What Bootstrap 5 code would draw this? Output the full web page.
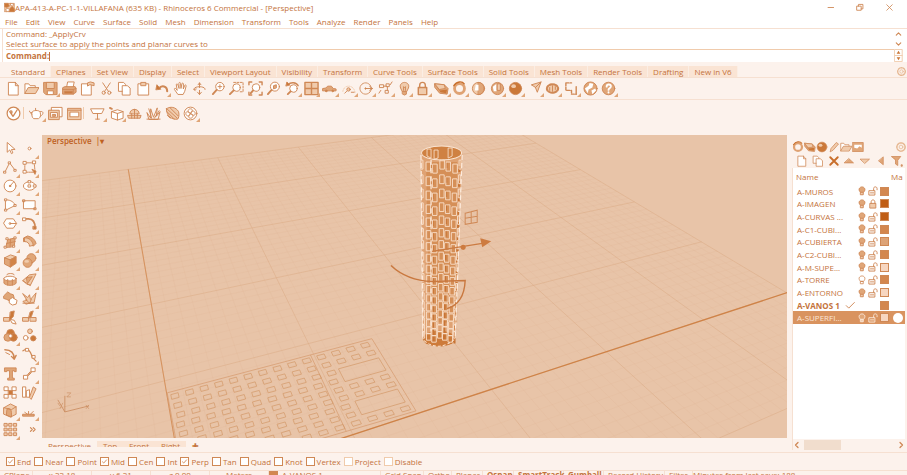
<!DOCTYPE html>
<html lang="en">
<head>
<meta charset="utf-8">
<meta name="viewport" content="width=device-width, initial-scale=1">
<title>APA-413-A-PC-1-1-VILLAFANA (635 KB) - Rhinoceros 6 Commercial - [Perspective]</title>
<link rel="stylesheet" href="https://cdn.jsdelivr.net/npm/bootstrap@5.3.0/dist/css/bootstrap.min.css">
<style>
:root { --ink:#c4733c; --line:#cf8855; --soft:#f0cbac; --mid:#e0a678; --deep:#cb7838; --face:#fcf2ec; --rule:#f6e0d1; --view:#e8c4a8; }
body { font-family:"Open Sans","Noto Sans",sans-serif; font-size:8px; line-height:12px; color:var(--ink); background:var(--face); }
svg { display:block; }
.glyph { width:15px; height:15px; fill:none; stroke:var(--line); stroke-width:1; stroke-linejoin:round; stroke-linecap:round; }
.glyph .f, .f { fill:var(--soft); }
.m { fill:var(--mid); }
.d { fill:var(--deep); }
.w { fill:#fff; }
.titlebar { height:15px; }
.titlebar .glyph { width:11px; height:11px; }
.winbtns { gap:18px; padding-right:12px; }
.plain { background:none; border:0; padding:0; color:inherit; font-size:inherit; line-height:inherit; text-align:left; text-decoration:none; }
.menubar { height:13px; gap:8px; padding-left:5px; }
.cmd { border-top:1px solid var(--rule); padding-left:2px; }
.cmdbox { border-left:1px solid var(--rule); padding-left:3px; }
.history { height:21px; line-height:10px; border-bottom:1px solid var(--soft); }
.prompt { height:12px; }
.prompt input { border:0; border-left:1px solid var(--ink); outline:0; height:9px; padding:0; background:none; color:inherit; }
.spin { width:9px; }
.spin .glyph { width:9px; height:10px; }
.spin .glyph.duo { height:13px; }
.tabstrip { height:12px; margin-top:4px; padding-left:6px; border-bottom:1px solid var(--rule); }
.tabstrip a { padding:0 5px; background:#fae4d4; border-right:1px solid #fbeee4; }
.tabstrip a.on { background:var(--face); }
.tabstrip .glyph { width:11px; height:11px; }
.tools1 { height:22px; padding-left:4px; border-bottom:1px solid var(--rule); }
.tools2 { height:26px; padding-left:4px; }
.run1 { width:614px; }
.run2 { width:196px; }
.tool { position:relative; line-height:1; border:0; }
.fly::after { content:""; position:absolute; right:0; bottom:-1px; border:2px solid transparent; border-right-color:var(--mid); border-bottom-color:var(--mid); }
.sep { width:5px; border-left:1px solid var(--soft); height:12px; }
.workspace { padding-top:9px; min-height:0; }
.palette { width:38px; margin:4px 0 13px 1px; display:grid; grid-template-columns:1fr 1fr; grid-auto-rows:1fr; }
.palette .glyph { width:15px; height:15px; }
.stage { margin-left:3px; }
.scene { background:var(--view); }
.scene svg { width:100%; height:100%; }
.scene-title { position:absolute; left:5px; top:0; color:#bf6122; font-weight:600; }
.viewtabs { height:9px; overflow:hidden; padding-top:3px; margin-bottom:5px; }
.viewtabs a { padding:0 6px; line-height:10px; }
.viewtabs a.side { background:#fae4d4; }
.panel { width:115px; margin:5px 0 2px 5px; }
.paneltabs { height:14px; }
.paneltabs .glyph { width:12px; height:12px; }
.paneltools { height:14px; }
.paneltools .glyph { width:12px; height:12px; }
.layers { border-left:1px solid var(--rule); margin-right:2px; }
.layertable { width:100%; table-layout:fixed; line-height:11px; }
.layertable th { font-weight:400; height:17px; padding:0 0 0 3px; white-space:nowrap; overflow:hidden; }
.layertable td { padding:0 0 0 4px; height:12px; white-space:nowrap; overflow:hidden; }
.layertable td + td { padding:0; }
.layertable tr:nth-child(3n+2) td { height:13px; }
.layertable tr:nth-child(3n) td { height:13px; }
.layertable .glyph { width:10px; height:10px; margin:auto; }
.layertable .chosen { background:#d9935f; color:#fbe6d6; }
.layertable .chosen .glyph { stroke:#fbe6d6; }
.swatch { display:block; width:9px; height:9px; border:1px solid var(--line); }
.t1 { background:#d3874f; } .t2 { background:#c05e16; } .t3 { background:#dda377; } .t4 { background:#f7d6c0; }
.ball { display:block; width:10px; height:10px; border-radius:50%; background:#fff; }
.hscroll { height:11px; background:var(--face); }
.hscroll .glyph { width:8px; height:8px; }
.thumb { width:37px; height:10px; background:#f1ddcd; margin-left:3px; }
.bottom { height:23px; overflow:hidden; border-top:1px solid var(--rule); }
.osnap { height:17px; padding-left:6px; gap:3px; }
.osnap label { display:flex; align-items:center; gap:2px; }
.osnap .form-check-input { width:9px; height:9px; margin:0; border-radius:0; border:1px solid var(--line); background-color:#fff; }
.osnap .form-check-input:checked { background-image:url("data:image/svg+xml,%3Csvg xmlns='http://www.w3.org/2000/svg' viewBox='0 0 9 9'%3E%3Cpath d='M1.5 4.5l2 2 4-4.500' fill='none' stroke='%23c9783f'/%3E%3C/svg%3E"); }
.osnap .form-check-input:disabled { border-color:var(--soft); opacity:1; }
.osnap .form-check-input:disabled ~ span { opacity:1; }
.status { border-top:1px solid var(--rule); height:12px; line-height:8px; white-space:nowrap; }
.status > * { flex:none; border-right:1px solid var(--rule); height:12px; }
.c26{width:33px}.c59{width:59px}.c28{width:28px}.c33{width:31px}.c44{width:43px}.c50{width:50px}.c40{width:40px}.c61{width:61px}.c115{width:112px}
</style>
<script src="https://cdn.jsdelivr.net/npm/bootstrap@5.3.0/dist/js/bootstrap.bundle.min.js"></script>
</head>
<body class="vh-100 d-flex flex-column overflow-hidden">
<svg class="d-none" xmlns="http://www.w3.org/2000/svg">
<symbol id="rhino" viewBox="0 0 16 16"><path class="f" d="M1 2h14v12H1z"/><path class="d" d="M1 2h5l2 4-4 2-3-1zM9 9l3-3 3 4v4H7z"/><path class="w" d="M3 10l4-1 1 4-4 1zM10 2l4 1-1 3-3-1z"/></symbol>
<symbol id="min" viewBox="0 0 16 16"><path stroke-width="1.300" d="M3 8h8"/></symbol>
<symbol id="max" viewBox="0 0 16 16"><path stroke-width="1.300" d="M3 6h6v6H3zM5 6V3.500h6.500V10H9"/></symbol>
<symbol id="close" viewBox="0 0 16 16"><path stroke-width="1.200" d="M4 4l8 8M12 4l-8 8"/></symbol>
<symbol id="up" viewBox="0 0 16 16"><path stroke-width="2" d="M4 10l4-4 4 4"/></symbol>
<symbol id="down" viewBox="0 0 16 16"><path stroke-width="2" d="M4 6l4 4 4-4"/></symbol>
<symbol id="left" viewBox="0 0 16 16"><path stroke-width="2.500" d="M10 3L5 8l5 5"/></symbol>
<symbol id="right" viewBox="0 0 16 16"><path stroke-width="2.500" d="M6 3l5 5-5 5"/></symbol>
<symbol id="spinner" viewBox="0 0 9 14"><path stroke="#f0cbac" d="M.5.5h8v13h-8zM.5 7h8"/><path class="d" stroke="none" d="M2.500 5h4l-2-3zM2.500 9h4l-2 3z"/></symbol>
<symbol id="gear" viewBox="0 0 16 16"><circle stroke="#e6b892" cx="8" cy="8" r="5.500" stroke-width="2" stroke-dasharray="2.500 1.500"/><circle stroke="#e6b892" cx="8" cy="8" r="2.500"/></symbol>
<symbol id="new" viewBox="0 0 16 16"><path class="w" d="M3 1.500h7l3 3.500v10H3zM10 1.500V5h3"/></symbol>
<symbol id="open" viewBox="0 0 16 16"><path class="w" d="M1 13V3h4l1.500 2H12v2"/><path class="f" d="M1 13l3.500-6H16l-3.500 6z"/></symbol>
<symbol id="save" viewBox="0 0 16 16"><path class="m" d="M1 1.500h14v13H3l-2-2z"/><path class="f" d="M4 1.500h8V8H4z"/><path class="w" d="M5 10.500h6v4H5z"/></symbol>
<symbol id="print" viewBox="0 0 16 16"><path class="w" d="M5 6l1-5h7l-1 5"/><path class="m" d="M1 7l2-1h11l1 2v4l-3 2H1z"/><path class="d" d="M3 11h8v2H3z"/><path d="M1 9h11l3-1M12 9v5"/></symbol>
<symbol id="notes" viewBox="0 0 16 16"><path class="w" d="M2 3h10v12H2z"/><path class="f" d="M8 5V2l3-1 4 1v3l-4-1z"/></symbol>
<symbol id="cut" viewBox="0 0 16 16"><path d="M4 2l6 9M12 2l-6 9"/><circle cx="5" cy="12.500" r="1.700"/><circle cx="11" cy="12.500" r="1.700"/></symbol>
<symbol id="copy" viewBox="0 0 16 16"><path class="w" d="M2 1.500h5l2 2V11H2z"/><path class="w" d="M6 5h5l3 2.500V15H6z"/></symbol>
<symbol id="paste" viewBox="0 0 16 16"><path class="w" d="M2.500 3h11v12h-11z"/><path class="f" d="M5.500 1.500h5V5h-5z"/></symbol>
<symbol id="undo" viewBox="0 0 16 16"><path stroke-width="2.200" d="M4 8c3-4 9-3 9 3"/><path class="d" d="M1 9l1-5 4 4.500z"/></symbol>
<symbol id="hand" viewBox="0 0 16 16"><path class="w" d="M5 14L1.500 9c-.5-1 .8-1.600 1.500-.8L4.500 10 3.500 4c0-1.300 1.400-1.300 1.700 0L6.500 8 6.300 2.500c0-1.300 1.600-1.300 1.700 0L8.500 8l1-5c.2-1.200 1.600-1 1.600.2L11 8.500l1.500-3.800c.5-1 1.700-.5 1.500.6L12.500 11 11 14z"/></symbol>
<symbol id="orbit" viewBox="0 0 16 16"><path d="M8 2v5M8 10v4M6 12l2 2.500 2-2.500M2 9c-1-4 13-4 12 0M3.500 10.500L2 9l2.500-.5"/><path d="M6.500 4L8 2l1.500 2"/></symbol>
<symbol id="zoom" viewBox="0 0 16 16"><circle class="w" cx="9.500" cy="6" r="4.500"/><path stroke-width="2" d="M6 9.500L2 14"/><path d="M9.500 4v4M7.500 6h4"/></symbol>
<symbol id="zoomwin" viewBox="0 0 16 16"><path stroke-dasharray="2 1.500" d="M5 1.500h10v10h-4"/><circle class="w" cx="8" cy="7" r="4"/><path stroke-width="2" d="M5 10l-4 4"/></symbol>
<symbol id="zoomext" viewBox="0 0 16 16"><circle class="w" cx="8.500" cy="7" r="4"/><path stroke-width="2" d="M5.500 10L3 13"/><path stroke-width="1.500" d="M1 4V1h3M12 1h3v3M15 12v3h-3M4 15H1v-3"/></symbol>
<symbol id="zoomsel" viewBox="0 0 16 16"><circle class="w" cx="9.500" cy="6" r="4.800"/><path class="m" d="M8 8V5l3-1v3z"/><path stroke-width="2" d="M6 9.500L2 14"/></symbol>
<symbol id="zoomundo" viewBox="0 0 16 16"><circle class="w" cx="9" cy="8" r="4"/><path stroke-width="2" d="M6 11l-3 3"/><path stroke-width="1.500" d="M3 4c3-3 9-3 11 1"/><path class="d" d="M1 5l1-4 3 3z"/></symbol>
<symbol id="four" viewBox="0 0 16 16"><path class="f" stroke-width="1.500" d="M1 1.500h14v13H1zM8 1.500v13M1 8h14"/></symbol>
<symbol id="car" viewBox="0 0 16 16"><path class="m" d="M1 8l3-.5L6 5.500h4L12 8l3 .5v2H1z"/><circle class="d" cx="4.500" cy="10.500" r="1"/><circle class="d" cx="11.500" cy="10.500" r="1"/></symbol>
<symbol id="cplane" viewBox="0 0 16 16"><path stroke="#f0cbac" stroke-dasharray="1.500 1.500" d="M2 11c1-7 11-8 13 1"/><circle class="f" cx="8" cy="9" r="1.800"/><path d="M11 12h3M4 13l2-2"/></symbol>
<symbol id="circ" viewBox="0 0 16 16"><circle stroke-dasharray="2 1" cx="7" cy="8" r="6"/><path d="M7 8h7M11.500 6l3 2-3 2"/><circle class="d" cx="7" cy="8" r=".7"/></symbol>
<symbol id="points" viewBox="0 0 16 16"><path d="M2 4h4v3H2zM9 3h3v3H9zM8 10h3v3H8zM1 13l2-3M6 5.500h3M10 6v4M13 4l2-3"/></symbol>
<symbol id="lamp" viewBox="0 0 16 16"><path class="f" d="M5.500 11L3.800 7.500C2.500 4 5 1.500 8 1.500S13.500 4 12.200 7.500L10.500 11z"/><path class="m" d="M6 11h4v3l-2 1-2-1z"/><path d="M7 10V6l1 1 1-1v4"/></symbol>
<symbol id="lampon" viewBox="0 0 16 16"><path class="m" stroke-width="1.500" d="M5.500 10C1 6 4 1.500 8 1.500S15 6 10.500 10z"/><path class="f" stroke-width="1.500" d="M6 10h4v4H6z"/></symbol>
<symbol id="lampoff" viewBox="0 0 16 16"><path class="w" stroke-width="1.300" d="M5.500 10C1 6 4 1.500 8 1.500S15 6 10.500 10zM6 10h4v4H6z"/></symbol>
<symbol id="lock" viewBox="0 0 16 16"><path class="f" stroke-width="1.500" d="M3.500 7h9v7.500h-9z"/><path stroke-width="1.500" d="M5 7V4.500c0-4 6-4 6 0V7"/></symbol>
<symbol id="unlock" viewBox="0 0 16 16"><path stroke-width="1.500" d="M2 7.500h9v7H2zM9 7V4c0-3.500 5.500-3.500 5.500 0v2M4 11h5"/></symbol>
<symbol id="layer" viewBox="0 0 16 16"><path class="m" d="M1 3l10 1 4 4-1 6-8-1-5-6z"/><path class="f" d="M1 3l10 1 1 4-6 1z"/><path class="d" stroke="none" d="M3 7l3 3 8-1-1 4-6-1z"/></symbol>
<symbol id="ring" viewBox="0 0 16 16"><circle cx="8" cy="8" r="5.300" stroke="#dfa273" stroke-width="3"/><path d="M2 5c3-5 9-5 11-2" stroke="#c86e2b" stroke-width="1.500"/></symbol>
<symbol id="sphere1" viewBox="0 0 16 16"><circle class="f" cx="8" cy="8" r="6.500"/><path class="m" d="M8 1.500c8 0 8 13 0 13z"/><path class="w" stroke="none" d="M5 4h3v6H4z"/></symbol>
<symbol id="sphere2" viewBox="0 0 16 16"><circle class="m" cx="8" cy="8" r="6.500"/><path class="w" stroke="none" d="M3 6l4-3v8H4z"/><path class="f" d="M8 3h3v7H8z"/></symbol>
<symbol id="sphere3" viewBox="0 0 16 16"><circle class="d" cx="8" cy="8" r="6.500"/><ellipse class="f" stroke="none" cx="6" cy="5.500" rx="2.500" ry="2"/></symbol>
<symbol id="spot" viewBox="0 0 16 16"><path class="f" d="M5 4l10-3-4 11-2-5z"/><path d="M9 7l6-6"/></symbol>
<symbol id="gears" viewBox="0 0 16 16"><ellipse class="f" cx="8" cy="8" rx="6" ry="4.500" stroke-width="2.200" stroke-dasharray="2 1.500"/><path d="M8 5v6M5 7v3M11 6v3"/></symbol>
<symbol id="dims" viewBox="0 0 16 16"><path stroke-width="1.500" stroke-dasharray="3 1.500" d="M2 2v8h6v4h5M2 2h6"/><path stroke-width="1.500" d="M13 6v8"/></symbol>
<symbol id="globe" viewBox="0 0 16 16"><circle class="m" cx="8" cy="8" r="7"/><path class="w" stroke="none" d="M2 8l4-3 1-3 4 1-1 4-4 2-1 4zM9 10l4-2 1 2-4 4z"/></symbol>
<symbol id="help" viewBox="0 0 16 16"><circle class="m" cx="8" cy="8" r="6.700"/><path stroke="#fff" stroke-width="2" d="M6 6c0-3 5-3 4.500 0C10 8 8 7.500 8 9.500M8 12v.2"/></symbol>
<symbol id="vray" viewBox="0 0 16 16"><circle class="w" stroke-width="1.300" cx="8" cy="8" r="6.800"/><path stroke-width="1.400" d="M4 6l3.500 5L12 4M4 6c2-2 3 0 2 2"/></symbol>
<symbol id="teapot" viewBox="0 0 16 16"><path class="w" d="M3 7c0-3 9-3 9 0 1 5-1 6-2 6.500H5C3 12 3 10 3 7zM3 9L0 5M12 6c4-1 4 3 0 5M7 4V2.500"/></symbol>
<symbol id="frames" viewBox="0 0 16 16"><path class="w" d="M4 1.500h11v10H4z"/><path class="f" d="M1 4.500h11v10H1z"/><path class="w" d="M3 7h7v5H3z"/><path class="m" d="M5 9h3v2H5z"/></symbol>
<symbol id="frame" viewBox="0 0 16 16"><path class="f" d="M1 2.500h14v12H1z"/><path class="w" d="M3.500 6.500h9v5h-9z"/><path d="M1 4.500h14"/></symbol>
<symbol id="plane" viewBox="0 0 16 16"><path class="w" d="M1 3h14l-2.500 5h-9z"/><path d="M8 8v6M6 14h4"/></symbol>
<symbol id="cube" viewBox="0 0 16 16"><path class="w" d="M3 6l6-2 6 2v7l-6 2-6-2zM3 6l6 2 6-2M9 8v7"/><path stroke-width="2" d="M1 2l2 1"/></symbol>
<symbol id="dome" viewBox="0 0 16 16"><path class="f" d="M3 8c0-6 10-6 10 0zM1 10h14l-1 3H2z"/><path d="M8 3.500V13M5 8v5M11 8v5"/></symbol>
<symbol id="fur" viewBox="0 0 16 16"><path d="M3 14L1 7l4 6V3l3 9 4-10-1 9 4-5-2 8zM1 14h14M6 13L3 3M9 13l5-8"/></symbol>
<symbol id="leaf" viewBox="0 0 16 16"><path class="f" d="M1.500 3c4-3 10-2 13 3 1 4 0 7-1 8-6 1-12-3-12-11z"/><path d="M2 3l11 10M5 1.500l9 9M2 6l8 8M2.500 10l3 3"/></symbol>
<symbol id="fan" viewBox="0 0 16 16"><circle class="w" cx="8" cy="8" r="6.800"/><path d="M8 8c-4-1-3-5 0-5s2 3 0 5c1-4 5-3 5 0s-3 2-5 0c4 1 3 5 0 5s-2-3 0-5c-1 4-5 3-5 0s3-2 5 0"/></symbol>
<symbol id="pick" viewBox="0 0 16 16"><path class="w" d="M4.500 2v10l2.700-2.500 1.800 4 1.500-.8L9 9h3.500z"/></symbol>
<symbol id="point" viewBox="0 0 16 16"><circle class="w" cx="8" cy="8" r="1.500"/></symbol>
<symbol id="poly" viewBox="0 0 16 16"><path d="M2 13L7 3l6 8"/><path class="w" d="M1 12h2v2H1zM6 2h2v2H6zM12 10h2v2h-2z"/></symbol>
<symbol id="bbox" viewBox="0 0 16 16"><path stroke-dasharray="1.500 1" d="M3 13V3h10l1 10z"/><path class="w" d="M1.500 1.500h3v3h-3zM11.500 1h3v3h-3zM1.500 11h3v3h-3z"/><path class="d" d="M11 10l4 2-1 3z"/></symbol>
<symbol id="circle" viewBox="0 0 16 16"><circle class="w" cx="7.500" cy="8.500" r="6.300"/><path d="M7.500 8.500l4-4.500"/><circle class="d" cx="7.500" cy="8.500" r=".8"/></symbol>
<symbol id="ellipse" viewBox="0 0 16 16"><ellipse class="w" cx="8" cy="8.500" rx="6.500" ry="4.500"/><path class="w" d="M6.800 7.300h2.400v2.400H6.800zM6.800 2.800h2.400v2.400H6.800zM12.500 7.300H15v2.400h-2.500z"/></symbol>
<symbol id="arc" viewBox="0 0 16 16"><path class="w" d="M3 3c6 0 9 3 10 6L3 14z"/><path class="w" d="M2 2h2v2H2zM12 8h2v2h-2zM2 13h2v2H2z"/></symbol>
<symbol id="rect" viewBox="0 0 16 16"><path class="w" d="M2 4h12v8.500H2z"/><path d="M1 3h2v2H1zM13 11.500h2v2h-2z"/></symbol>
<symbol id="hex" viewBox="0 0 16 16"><path class="w" d="M4 3h7l3.500 5L11 13H4L.8 8z"/><circle cx="7.500" cy="8" r="1"/><path d="M8 8h6"/></symbol>
<symbol id="fillet" viewBox="0 0 16 16"><path stroke-width="1.800" d="M2 3h5c5 0 7 3 7 10"/><path class="w" d="M1 2h3v3H1z"/><path class="d" d="M12 11h3v3h-3z"/></symbol>
<symbol id="patch" viewBox="0 0 16 16"><path class="m" d="M3 13l2-8 8-2-1 9z"/><path class="w" d="M1.500 12h2v2h-2zM3.500 3h2v2h-2zM12 2h2v2h-2zM10.500 11h2v2h-2z"/><path d="M4 9l9-2M8 4.500L7.500 13"/></symbol>
<symbol id="sweep" viewBox="0 0 16 16"><path class="m" d="M2 3l4-2c5 1 8 4 9 8l-3 3C11 8 7 5 2 7z"/><path class="f" d="M3 3c5 0 8 3 9 8l-4 1c0-3-2-5-5-5z"/></symbol>
<symbol id="box" viewBox="0 0 16 16"><path class="m" d="M2 5l6 2v8l-6-3z"/><path class="f" d="M2 5l6-3 6 2-6 3z"/><path fill="#d28448" d="M8 7l6-3v7l-6 4z"/></symbol>
<symbol id="balls" viewBox="0 0 16 16"><circle class="m" cx="10" cy="5.500" r="4.800"/><circle class="m" cx="6" cy="10.500" r="4.800"/><ellipse class="f" stroke="none" cx="5" cy="9" rx="2.500" ry="1.500"/></symbol>
<symbol id="tube" viewBox="0 0 16 16"><path class="m" d="M1 7v5c3 3 10 3 13 0V7z"/><ellipse class="w" cx="7.500" cy="7" rx="6.500" ry="2.500"/><path d="M4 3c0-2 8-2 8 0M5 8v6M10 8v6"/></symbol>
<symbol id="sheet" viewBox="0 0 16 16"><path class="f" d="M1 9l7-6 7-1-6 12z"/><path class="m" d="M5 6l6-1-5 7z"/><path d="M1 9l4 4 4 1"/></symbol>
<symbol id="puzzle" viewBox="0 0 16 16"><path class="m" d="M1 5l4-4 3 2 3 1 1 4-4 3-4-2-3-1z"/><path class="w" d="M7 9l3-2 5 3-1 4-4 1-3-2z"/></symbol>
<symbol id="burst" viewBox="0 0 16 16"><path class="f" d="M1 3l5 4 2-3 1 5 6-7-2 10-9 2-3-3 4-1z"/><path d="M1 13h12M4 9l4 4M10 9l-2 4"/></symbol>
<symbol id="trim" viewBox="0 0 16 16"><path class="f" d="M1 8h7l-1 4H1z"/><path class="d" d="M8 2l4-1-1 6-4 4z"/><path class="w" d="M8 10l4 1 2 4-4-1z"/></symbol>
<symbol id="split" viewBox="0 0 16 16"><path class="f" d="M1 8h6v4H1zM9 8h6v4H9z"/><path class="d" d="M9 2l3-1-2 6-3 2z"/></symbol>
<symbol id="group" viewBox="0 0 16 16"><circle class="d" cx="8" cy="5.500" r="4"/><circle class="m" cx="5" cy="10" r="4"/><circle class="d" cx="11" cy="10" r="4"/><circle class="w" cx="8" cy="8.500" r="2"/></symbol>
<symbol id="ungroup" viewBox="0 0 16 16"><circle class="f" cx="8.500" cy="3.500" r="2.500"/><circle class="w" cx="4" cy="10.500" r="2.500"/><circle class="d" cx="12" cy="11" r="2.800"/></symbol>
<symbol id="curve" viewBox="0 0 16 16"><path stroke-width="1.500" d="M2 3c7 0 10 4 10 10M9 10l3 3 2-4"/><path d="M3 6l4 2"/></symbol>
<symbol id="blend" viewBox="0 0 16 16"><path stroke-width="1.300" d="M1 4c5-4 8 0 10 7l4 4"/><path class="w" d="M4 1.500h3v3H4zM11 9h3v3h-3z"/></symbol>
<symbol id="text" viewBox="0 0 16 16"><path class="m" d="M2 2h12v4h-2V5h-2v8h2v2H5v-2h2V5H4v1H2z"/></symbol>
<symbol id="move" viewBox="0 0 16 16"><path class="w" d="M2 10h4v4H2zM10 2h4v4h-4z"/><path class="m" d="M6 9l3-3 1 1-3 3z"/></symbol>
<symbol id="array" viewBox="0 0 16 16"><path d="M4 4l8 8M12 4L4 12"/><path class="w" d="M1.500 2h4v4h-4zM10 2h4v4h-4zM1.500 10h4v4h-4zM10 10h4v4h-4z"/><path class="d" d="M6 6h4v4H6z"/></symbol>
<symbol id="orient" viewBox="0 0 16 16"><path class="w" d="M1 2h3v11H1zM5 6l3-1v8H5z"/><path class="f" d="M8 13l4-11 3 2-5 11z"/></symbol>
<symbol id="solid" viewBox="0 0 16 16"><path class="f" d="M1 5l7-4 6 3v8l-6 3-7-3z"/><path class="m" d="M4 8c0-4 5-2 5 2v5l-5-2z"/><path d="M1 5l8 2 5-3"/></symbol>
<symbol id="analyze" viewBox="0 0 16 16"><path class="m" d="M1 12h12v2H1zM3 10l3 2M7 9v3M12 9l-3 3"/></symbol>
<symbol id="grid9" viewBox="0 0 16 16"><path class="f" d="M1.500 1.500h3v3h-3zM6.500 1.500h3v3h-3zM11.500 1.500h3v3h-3zM1.500 6.500h3v3h-3zM6.500 6.500h3v3h-3zM11.500 6.500h3v3h-3zM1.500 11.500h3v3h-3zM6.500 11.500h3v3h-3zM11.500 11.500h3v3h-3z"/></symbol>
<symbol id="more" viewBox="0 0 16 16"><path stroke-width="1.200" d="M9 6l2 2-2 2M12 6l2 2-2 2"/></symbol>
<symbol id="brush" viewBox="0 0 16 16"><path class="f" d="M3 14l1-4 7-8 3 2-7 8z"/></symbol>
<symbol id="texture" viewBox="0 0 16 16"><path class="m" d="M1 2h14v12H1z"/><path class="w" stroke="none" d="M3 5h10v4l-3-2-3 3-4-1z"/></symbol>
<symbol id="x" viewBox="0 0 16 16"><path stroke="#c86e2b" stroke-width="2.500" d="M3 3l10 10M13 3L3 13"/></symbol>
<symbol id="tup" viewBox="0 0 16 16"><path class="m" d="M2 10.500h12L8 5z"/></symbol>
<symbol id="tdown" viewBox="0 0 16 16"><path class="f" d="M2 5.500h12L8 11z"/></symbol>
<symbol id="tleft" viewBox="0 0 16 16"><path class="m" d="M11 3v10L5 8z"/></symbol>
<symbol id="filter" viewBox="0 0 16 16"><path class="m" d="M1 2h12L9 7v7l-3-2V7z"/><path class="d" d="M14 13h1v2h-1z"/></symbol>
<symbol id="check" viewBox="0 0 16 16"><path stroke-width="1.500" d="M2 9l4 4 9-9"/></symbol>
</svg>

<header class="bg-white flex-shrink-0">
  <div class="titlebar d-flex align-items-center">
    <svg class="glyph ms-1"><use href="#rhino"/></svg>
    <span>APA-413-A-PC-1-1-VILLAFANA (635 KB) - Rhinoceros 6 Commercial - [Perspective]</span>
    <div class="winbtns d-flex ms-auto">
      <button class="plain" aria-label="Minimize"><svg class="glyph"><use href="#min"/></svg></button>
      <button class="plain" aria-label="Restore"><svg class="glyph"><use href="#max"/></svg></button>
      <button class="plain" aria-label="Close"><svg class="glyph"><use href="#close"/></svg></button>
    </div>
  </div>
  <nav class="menubar d-flex align-items-center">
    <a class="plain" href="#">File</a><a class="plain" href="#">Edit</a><a class="plain" href="#">View</a><a class="plain" href="#">Curve</a><a class="plain" href="#">Surface</a><a class="plain" href="#">Solid</a><a class="plain" href="#">Mesh</a><a class="plain" href="#">Dimension</a><a class="plain" href="#">Transform</a><a class="plain" href="#">Tools</a><a class="plain" href="#">Analyze</a><a class="plain" href="#">Render</a><a class="plain" href="#">Panels</a><a class="plain" href="#">Help</a>
  </nav>
  <div class="cmd d-flex">
    <div class="cmdbox flex-fill">
      <div class="history">Command: _ApplyCrv<br>Select surface to apply the points and planar curves to</div>
      <div class="prompt d-flex align-items-center"><label class="fw-bold" for="cmdline">Command:</label><input class="flex-fill" id="cmdline" type="text"></div>
    </div>
    <div class="spin me-1">
      <button class="plain d-block" aria-label="Scroll up"><svg class="glyph"><use href="#up"/></svg></button>
      <button class="plain d-block" aria-label="Scroll down"><svg class="glyph"><use href="#down"/></svg></button>
      <button class="plain d-block" aria-label="Command history"><svg class="glyph duo"><use href="#spinner"/></svg></button>
    </div>
  </div>
</header>

<nav class="tabstrip d-flex flex-shrink-0">
  <a class="plain on" href="#">Standard</a><a class="plain" href="#">CPlanes</a><a class="plain" href="#">Set View</a><a class="plain" href="#">Display</a><a class="plain" href="#">Select</a><a class="plain" href="#">Viewport Layout</a><a class="plain" href="#">Visibility</a><a class="plain" href="#">Transform</a><a class="plain" href="#">Curve Tools</a><a class="plain" href="#">Surface Tools</a><a class="plain" href="#">Solid Tools</a><a class="plain" href="#">Mesh Tools</a><a class="plain" href="#">Render Tools</a><a class="plain" href="#">Drafting</a><a class="plain" href="#">New in V6</a>
  <button class="plain ms-auto" aria-label="Toolbar options"><svg class="glyph"><use href="#gear"/></svg></button>
</nav>
<div class="tools1 d-flex align-items-center flex-shrink-0"><div class="run1 d-flex" data-tools="new open save+ print notes cut copy paste undo+ hand orbit zoom zoomwin zoomext zoomsel zoomundo+ four+ car+ cplane+ circ+ points+ lamp+ lock+ layer+ ring+ sphere1 sphere2+ sphere3+ spot+ gears+ dims+ globe help+"></div></div>
<div class="tools2 d-flex align-items-center flex-shrink-0"><div class="run2 d-flex align-items-center" data-tools="vray | teapot+ frames frame | plane+ cube+ dome fur leaf fan+"></div></div>

<main class="workspace flex-fill d-flex overflow-hidden">
  <div class="palette flex-shrink-0" data-tools="pick point+ poly+ bbox+ circle+ ellipse+ arc+ rect+ hex+ fillet+ patch+ sweep+ box+ balls+ tube+ sheet+ puzzle burst+ trim split group+ ungroup curve blend+ text move+ array orient solid+ analyze+ grid9+ more"></div>
  <section class="stage flex-fill d-flex flex-column overflow-hidden">
    <div class="scene position-relative flex-fill overflow-hidden">
      <svg id="scene" viewBox="42 135 745 302" preserveAspectRatio="xMidYMid slice" fill="none" role="img" aria-label="Perspective viewport"></svg>
      <button class="plain scene-title">Perspective &nbsp;|▾</button>
    </div>
    <nav class="viewtabs d-flex flex-shrink-0"><a class="plain" href="#">Perspective</a><a class="plain side" href="#">Top</a><a class="plain side" href="#">Front</a><a class="plain side" href="#">Right</a><a class="plain" href="#">✚</a></nav>
  </section>
  <aside class="panel flex-shrink-0 d-flex flex-column">
    <div class="paneltabs d-flex align-items-center" data-plain="ring layer sphere3 brush open texture ~ gear"></div>
    <div class="paneltools d-flex align-items-center justify-content-between px-1" data-plain="new copy x tup tdown tleft filter"></div>
    <div class="layers bg-white flex-fill d-flex flex-column">
      <table class="layertable">
        <colgroup><col><col style="width:12px"><col style="width:12px"><col style="width:11px"><col style="width:12px"><col style="width:14px"></colgroup>
        <thead><tr><th colspan="5">Name</th><th class="p-0">Ma</th></tr></thead>
        <tbody id="layers"></tbody>
      </table>
      <div class="hscroll mt-auto d-flex align-items-center">
        <button class="plain" aria-label="Scroll left"><svg class="glyph"><use href="#left"/></svg></button>
        <div class="thumb"></div>
        <button class="plain ms-auto" aria-label="Scroll right"><svg class="glyph"><use href="#right"/></svg></button>
      </div>
    </div>
  </aside>
</main>

<footer class="bottom flex-shrink-0">
  <form class="osnap d-flex align-items-center" id="osnap"></form>
  <div class="status d-flex">
    <span class="c26 ps-1">CPlane</span><span class="c59 text-center">x 22.18</span><span class="c59 text-center">y 6.21</span><span class="c59 text-center">z 0.00</span><span class="c59 text-center">Meters</span>
    <span class="c115 d-flex gap-1"><i class="swatch t1"></i>A-VANOS 1</span><span class="c44 ps-1">Grid Snap</span><span class="c28 ps-1">Ortho</span><span class="c33 ps-1">Planar</span><b class="c33 ps-1">Osnap</b><b class="c50 ps-1">SmartTrack</b><b class="c40 ps-1">Gumball</b><span class="c61 ps-1">Record History</span><span class="c28 ps-1">Filter</span><span class="border-0">Minutes from last save: 188</span>
  </div>
</footer>

<script>
const glyph = n => `<svg class="glyph"><use href="#${n}"/></svg>`;
document.querySelectorAll('[data-tools]').forEach(box => {
  box.innerHTML = box.dataset.tools.split(' ').map(t => {
    if (t === '|') return '<span class="sep"></span>';
    const n = t.replace('+', '');
    return `<button class="tool btn p-0 flex-fill d-flex justify-content-center align-items-center ${t === n ? '' : 'fly'}" aria-label="${n}">${glyph(n)}</button>`;
  }).join('');
});
document.querySelectorAll('[data-plain]').forEach(box => {
  box.innerHTML = box.dataset.plain.split(' ').map(n => n === '~' ? '<span class="ms-auto"></span>' : `<button class="plain" aria-label="${n}">${glyph(n)}</button>`).join('');
});

const layers = [['A-MUROS','lampon','unlock','t1'],['A-IMAGEN','lampon','lock','t2'],['A-CURVAS ...','lampon','unlock','t2'],['A-C1-CUBI...','lampon','unlock','t1'],['A-CUBIERTA','lampon','unlock','t3'],['A-C2-CUBI...','lampon','unlock','t1'],['A-M-SUPE...','lampon','unlock','t4'],['A-TORRE','lampoff','unlock','t1'],['A-ENTORNO','lampon','unlock','t4'],['A-VANOS 1','','','t1'],['A-SUPERFI...','lampon','unlock','t4']];
document.getElementById('layers').innerHTML = layers.map(([name, lamp, lock, tone], i) =>
  `<tr class="${i === 10 ? 'chosen' : ''} ${i === 9 ? 'fw-bold' : ''}"><td>${name}</td><td>${i === 9 ? glyph('check') : ''}</td><td>${lamp && glyph(lamp)}</td><td>${lock && glyph(lock)}</td><td><span class="swatch ${tone} mx-auto"></span></td><td>${i === 10 ? '<span class="ball mx-auto"></span>' : ''}</td></tr>`).join('');

const snaps = 'End* Near Point Mid* Cen Int Perp* Tan Quad Knot Vertex Project- Disable-'.split(' ');
document.getElementById('osnap').innerHTML = snaps.map(s => {
  const n = s.replace(/[*-]/, '');
  return `<label><input class="form-check-input" type="checkbox" ${s.endsWith('*') ? 'checked' : ''} ${s.endsWith('-') ? 'disabled' : ''}><span>${n}</span></label>`;
}).join('');

/* ground plane in two-point perspective: u runs right, v runs away */
const P = (u, v) => { const a = .113 * u, b = .2137 * v, w = 1 + a + b; return [(184 + 1850 * a + 78 * b) / w, (489 - 56 * a - 130 * b) / w]; };
const f = p => p.map(n => n.toFixed(1)).join(' ');
const seg = (p, q) => `M${f(p)}L${f(q)}`;
const path = (d, stroke, width, extra = '') => `<path d="${d}" stroke="${stroke}" stroke-width="${width}" ${extra}/>`;
let minor = '', major = '';
for (let i = -10; i <= 50; i++) {
  const k = i / 10, s = seg(P(k, -1), P(k, 5));
  if (i % 10) minor += s; else major += s;
}
for (let i = -10; i <= 50; i++) {
  const k = i / 10, s = seg(P(-1.3, k), P(5, k));
  if (i % 10) minor += s; else major += s;
}
let out = path(minor, '#ddb18f', .5, 'opacity=".3"') + path(major, '#daa983', .7, 'opacity=".7"') + path(seg(P(0, 0), P(0, 5)), '#d6935f', 1) + path(seg(P(0, 0), P(5.2, 0)), '#cf8348', 1.3);

/* unrolled facade lying on the ground */
const A = [168,392], B = [372,338], C = [416,410], D = [184,478];
const Q = (s, t) => [0, 1].map(i => (1-s)*(1-t)*A[i] + s*(1-t)*B[i] + s*t*C[i] + (1-s)*t*D[i]);
const quad = (s, t, w, h) => `M${f(Q(s,t))}L${f(Q(s+w,t))}L${f(Q(s+w,t+h))}L${f(Q(s,t+h))}z`;
let win = '';
for (let c = 0; c < 14; c++) for (let r = 0; r < 9; r++) {
  const s = .015 + c * .071, t = .03 + r * .11;
  if (c > 10 && ((r > 1 && r < 4) || (r > 5 && r < 8))) continue;
  win += quad(s + (r % 3) * .005, t, .036, .055);
}
out += path(quad(0,0,1,1) + seg(Q(.7,0), Q(.7,1)), '#d69a6d', .7) + path(win, '#d29867', .7) + path(quad(.79,.25,.19,.17) + quad(.79,.68,.19,.18), '#d29867', .7);

/* tower shell with its openings */
out += '<path d="M421 153L423 338Q439 352 455 338L462 153Q441 140 421 153z" fill="#dfa273"/><ellipse cx="441.500" cy="153" rx="20" ry="7" fill="#cf8142" stroke="#fae4d2"/><ellipse cx="439" cy="338" rx="16" ry="8" fill="#cd7b3a"/><path d="M426 162h31v160h-28z" fill="#d08548" opacity=".65"/>';
let bays = '', dark = '';
for (let r = 0; r < 18; r++) {
  const y = 162 + r * 15 - r * r * .27, h = 9 - r * .15, half = 20.500 - r * .25;
  if (y > 336) break;
  [-.93,-.62,-.3,.05,.35,.68,.92].forEach((k, i) => {
    const w = (i === 0 || i === 6) ? 2 : 4.500, x = 441 - r * .13 + k * half - w / 2, yy = y + (i % 3) * 2 - 2;
    bays += `M${x.toFixed(1)} ${yy.toFixed(1)}h${w}v${h.toFixed(1)}h-${w}z`;
    if (i % 2) dark += `M${(x + w + 1).toFixed(1)} ${(yy + 2).toFixed(1)}h2v6h-2z`;
  });
}
out += `<path d="${dark}" fill="#c87434"/>` + path(bays, '#fae0cb', .9) + path('M421 155L423 338M462 155L455 338M431 160V330', '#fdebdd', 1.2, 'stroke-dasharray="5 3"') + path('M424 340Q439 352 455 338', '#fae0cb', 1, 'stroke-dasharray="3 2"');
out += path('M427 156v-7h4v9zM434 159v-9h4v8zM448 158v-10h4v8z', '#fae4d2', .8);

/* gumball handles and axis mark */
out += path('M391 265Q407 280 432 281L465 280Q464 303 447 308', '#c9783f', 1.400) + path('M432 251L482 243', '#cb7b42', 1.200) + '<circle cx="463" cy="247" r="2.500" fill="#cd7b40"/><path d="M480 238L491 241L482 247z" fill="#cd7b40"/>' + path('M465 213l12-3v12l-12 2zM471 211v12M465 218l12-2', '#d08a58', 1) + path('M66 411V395M66 411L90 405M66 411L59 399', '#c98a5c', .8) + '<path d="M87 404l3 4M90 404l-3 4M68 392h4l-4 4h4M59 402l2 3M64 402l-3 6" stroke="#c98a5c" stroke-width=".6"/>';
document.getElementById('scene').innerHTML = out;
</script>
</body>
</html>
